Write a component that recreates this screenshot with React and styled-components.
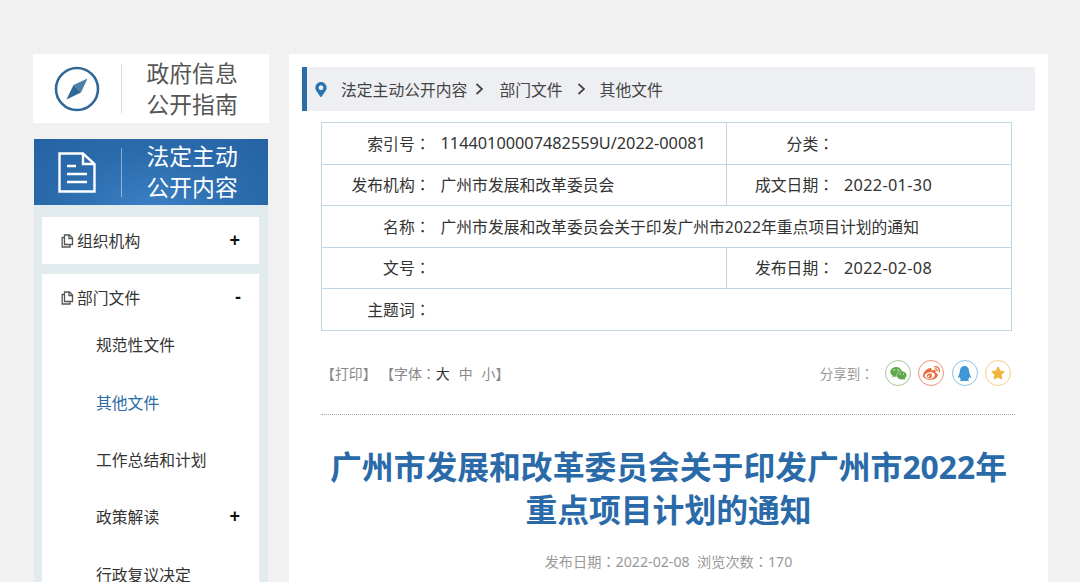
import React from "react";
import styled, { createGlobalStyle } from "styled-components";
import { FaMapMarkerAlt, FaQq, FaStar, FaWeibo, FaWeixin } from "react-icons/fa";

const GlobalStyle = createGlobalStyle`
  html, body {
    margin: 0;
    height: 100%;
    background: #f1f1f1;
    overflow: hidden;
  }
  * {
    box-sizing: border-box;
  }
`;

const Page = styled.div`
  display: flex;
  align-items: flex-start;
  gap: 20px;
  height: 582px;
  padding: 54px 32px 0 33px;
  overflow: hidden;
  font-family: "Noto Sans", "Noto Sans CJK SC", sans-serif;
  color: #333;
`;

const Sidebar = styled.aside`
  flex: 0 0 236px;
`;

const GuideCard = styled.div`
  display: flex;
  align-items: center;
  height: 69px;
  margin-bottom: 16px;
  padding-left: 21px;
  background: #fff;
`;

const HeadTitle = styled.div`
  width: 100px;
  font-size: 22.8px;
  line-height: 31px;
  color: ${(p) => (p.$light ? "#fff" : "#555")};
`;

const HeadIcon = styled.div`
  display: flex;
  justify-content: center;
  width: 46px;
`;

const HeadRule = styled.div`
  width: 1px;
  height: 49px;
  margin: 0 24.5px 0 21px;
  background: ${(p) => (p.$light ? "rgba(255,255,255,0.45)" : "#dcdcdc")};
`;

const SectionHead = styled.div`
  display: flex;
  align-items: center;
  height: 66px;
  margin: 0 1px;
  padding-left: 20px;
  background: radial-gradient(ellipse at 50% 110%, #3c82c6 0%, #2b6cad 55%, #2562a4 100%);
`;

const MenuPanel = styled.div`
  margin: 0 1px;
  padding: 12px 9px 0 8px;
  background: #e2ecef;
`;

const MenuCard = styled.div`
  margin-bottom: 10px;
  padding: 0 19px 0 19px;
  background: #fff;
`;

const MenuRow = styled.div`
  display: flex;
  align-items: center;
  justify-content: space-between;
  height: 47px;
  font-size: 15.8px;
`;

const MenuLabel = styled.span`
  display: flex;
  align-items: center;
  gap: 3px;
`;

const SubList = styled.div`
  margin-top: -5px;
`;

const SubRow = styled.div`
  display: flex;
  align-items: center;
  justify-content: space-between;
  height: 57.4px;
  padding-left: 35px;
  font-size: 15.8px;
  color: ${(p) => (p.$active ? "#2a6aa5" : "#333")};
`;

const Toggle = styled.span`
  font-family: "Liberation Sans", sans-serif;
  font-weight: 700;
  font-size: 18px;
  color: #111;
  margin-right: ${(p) => (p.$minus ? "-1px" : "0")};
`;

const Main = styled.main`
  flex: 1;
  height: 528px;
  padding: 13px;
  background: #fff;
`;

const Breadcrumb = styled.div`
  display: flex;
  align-items: center;
  height: 44px;
  padding-left: 8px;
  border-left: 5px solid #2b6ea6;
  background: #eeeff3;
  font-size: 15.8px;
  color: #444;
`;

const PinIcon = styled(FaMapMarkerAlt)`
  width: 12px;
  height: 15px;
  margin-right: 14px;
  color: #2b74b0;
`;

const Crumb = styled.span`
  color: #444;
`;

const CrumbArrow = styled.svg`
  width: 9px;
  height: 12px;
  margin: 0 ${(p) => p.$after}px 0 ${(p) => p.$before}px;
`;

const InfoTable = styled.table`
  width: 690px;
  margin: 11px 0 0 19px;
  border-collapse: collapse;
  table-layout: fixed;
  font-size: 15.8px;
  color: #333;
`;

const Row = styled.tr`
  height: 41.5px;
  border: 1px solid #bcd6e2;
`;

const LabelCell = styled.td`
  padding: 0;
  text-align: right;
  white-space: nowrap;
  ${(p) => p.$divide && "border-left: 1px solid #bcd6e2;"}
`;

const ValueCell = styled.td`
  padding-left: 10px;
  white-space: nowrap;
`;

const Num = styled.span`
  font-size: 16.3px;
  letter-spacing: ${(p) => p.$spacing || 0}px;
`;

// the reference centres the full-width colon in its cell, as the TC face does
const Colon = styled.span`
  font-family: "Noto Sans CJK TC", sans-serif;
`;

const Toolbar = styled.div`
  display: flex;
  align-items: center;
  justify-content: space-between;
  width: 694px;
  height: 84px;
  margin-left: 19px;
  padding: 2px 4px 0 0;
  border-bottom: 1px dotted #aaa;
  font-size: 13.9px;
  color: #888;
`;

const ToolLinks = styled.div`
  white-space: nowrap;
`;

const FontSize = styled.span`
  margin-left: ${(p) => p.$gap || 0}px;
  color: ${(p) => (p.$active ? "#333" : "#888")};
`;

const ShareBox = styled.div`
  display: flex;
  align-items: center;
  gap: 7.3px;
`;

const ShareLabel = styled.span`
  margin-right: 4px;
  font-size: 13.5px;
  color: #999;
`;

const ShareButton = styled.span`
  display: flex;
  align-items: center;
  justify-content: center;
  width: 26px;
  height: 26px;
  border: 1.5px solid ${(p) => p.$border};
  border-radius: 50%;
  color: ${(p) => p.$color};
  font-size: ${(p) => p.$size}px;
`;

const Title = styled.h1`
  margin: 30px 0 0 0;
  font-size: 31.8px;
  line-height: 43px;
  font-weight: 700;
  text-align: center;
  color: #2a6aa8;
`;

const Meta = styled.div`
  margin-top: 20px;
  text-align: center;
  font-size: 14.2px;
  color: #999;
`;

const CompassIcon = () => (
  <svg width="46" height="46" viewBox="0 0 46 46">
    <circle cx="23" cy="23" r="21" fill="none" stroke="#2f6796" strokeWidth="2.6" />
    <path d="M33.5 12.5 L27 26.5 L19.5 19 Z" fill="#2f6796" opacity="0.85" />
    <path d="M12.5 33.5 L19.5 19 L27 26.5 Z" fill="#2f6796" />
  </svg>
);

const DocIcon = () => (
  <svg width="38" height="41" viewBox="0 0 38 41" fill="none" stroke="#fff" strokeWidth="2.4">
    <path d="M1.5 1.5 H25 L36.5 12 V39.5 H1.5 Z" />
    <path d="M25 2 V12 H36" />
    <path d="M9 14 H18 M9 22 H29 M9 30 H29" />
  </svg>
);

const FileIcon = () => (
  <svg width="13" height="14" viewBox="0 0 13 14" fill="none" stroke="#555" strokeWidth="1.3">
    <path d="M3.5 3 V1 H8.5 L11.5 4 V10.5 H3.5 Z" />
    <path d="M8 1 V4.5 H11.5" />
    <path d="M3.5 3.5 H1.2 V13 H9 V10.5" />
  </svg>
);

const Arrow = ({ before, after }) => (
  <CrumbArrow $before={before} $after={after} viewBox="0 0 9 12" fill="none" stroke="#444" strokeWidth="1.7">
    <path d="M1.5 1 L7 6 L1.5 11" />
  </CrumbArrow>
);

const App = () => (
  <>
    <GlobalStyle />
    <Page>
      <Sidebar>
        <GuideCard>
          <HeadIcon>
            <CompassIcon />
          </HeadIcon>
          <HeadRule />
          <HeadTitle>
            政府信息
            <br />
            公开指南
          </HeadTitle>
        </GuideCard>
        <SectionHead>
          <HeadIcon>
            <DocIcon />
          </HeadIcon>
          <HeadRule $light />
          <HeadTitle $light>
            法定主动
            <br />
            公开内容
          </HeadTitle>
        </SectionHead>
        <MenuPanel>
          <MenuCard>
            <MenuRow>
              <MenuLabel>
                <FileIcon />
                组织机构
              </MenuLabel>
              <Toggle>+</Toggle>
            </MenuRow>
          </MenuCard>
          <MenuCard>
            <MenuRow>
              <MenuLabel>
                <FileIcon />
                部门文件
              </MenuLabel>
              <Toggle $minus>-</Toggle>
            </MenuRow>
            <SubList>
              <SubRow>规范性文件</SubRow>
              <SubRow $active>其他文件</SubRow>
              <SubRow>工作总结和计划</SubRow>
              <SubRow>
                政策解读
                <Toggle>+</Toggle>
              </SubRow>
              <SubRow>行政复议决定</SubRow>
            </SubList>
          </MenuCard>
        </MenuPanel>
      </Sidebar>
      <Main>
        <Breadcrumb>
          <PinIcon />
          <Crumb>法定主动公开内容</Crumb>
          <Arrow before={8} after={15} />
          <Crumb>部门文件</Crumb>
          <Arrow before={14} after={14} />
          <Crumb>其他文件</Crumb>
        </Breadcrumb>
        <InfoTable>
          <colgroup>
            <col width="109" />
            <col width="295.5" />
            <col width="108" />
            <col width="177.5" />
          </colgroup>
          <tbody>
            <Row>
              <LabelCell>索引号<Colon>：</Colon></LabelCell>
              <ValueCell>
                <Num>11440100007482559U/2022-00081</Num>
              </ValueCell>
              <LabelCell $divide>分类<Colon>：</Colon></LabelCell>
              <ValueCell />
            </Row>
            <Row>
              <LabelCell>发布机构<Colon>：</Colon></LabelCell>
              <ValueCell>广州市发展和改革委员会</ValueCell>
              <LabelCell $divide>成文日期<Colon>：</Colon></LabelCell>
              <ValueCell>
                <Num $spacing={0.3}>2022-01-30</Num>
              </ValueCell>
            </Row>
            <Row>
              <LabelCell>名称<Colon>：</Colon></LabelCell>
              <ValueCell colSpan={3}>广州市发展和改革委员会关于印发广州市2022年重点项目计划的通知</ValueCell>
            </Row>
            <Row>
              <LabelCell>文号<Colon>：</Colon></LabelCell>
              <ValueCell />
              <LabelCell $divide>发布日期<Colon>：</Colon></LabelCell>
              <ValueCell>
                <Num $spacing={0.3}>2022-02-08</Num>
              </ValueCell>
            </Row>
            <Row>
              <LabelCell>主题词<Colon>：</Colon></LabelCell>
              <ValueCell colSpan={3} />
            </Row>
          </tbody>
        </InfoTable>
        <Toolbar>
          <ToolLinks>
            【打印】 【字体<Colon>：</Colon>
            <FontSize $active>大</FontSize>
            <FontSize $gap={9}>中</FontSize>
            <FontSize $gap={9}>小</FontSize>】
          </ToolLinks>
          <ShareBox>
            <ShareLabel>分享到<Colon>：</Colon></ShareLabel>
            <ShareButton $border="#a5c795" $color="#5fa84a" $size={17}>
              <FaWeixin />
            </ShareButton>
            <ShareButton $border="#f0937a" $color="#ea6a3c" $size={17}>
              <FaWeibo />
            </ShareButton>
            <ShareButton $border="#8cc4e4" $color="#3f97d6" $size={15}>
              <FaQq />
            </ShareButton>
            <ShareButton $border="#f4cd8c" $color="#f2b440" $size={14}>
              <FaStar />
            </ShareButton>
          </ShareBox>
        </Toolbar>
        <Title>
          广州市发展和改革委员会关于印发广州市2022年
          <br />
          重点项目计划的通知
        </Title>
        <Meta>发布日期<Colon>：</Colon>2022-02-08&nbsp;&nbsp;浏览次数<Colon>：</Colon>170</Meta>
      </Main>
    </Page>
  </>
);

export default App;
